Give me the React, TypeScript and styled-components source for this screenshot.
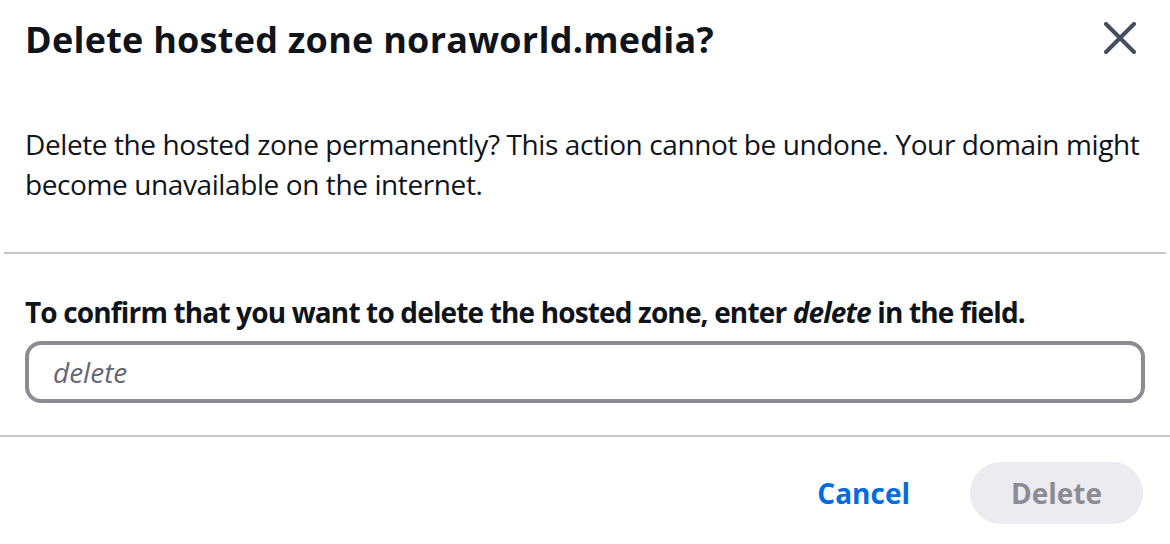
import React from "react";
import styled, { createGlobalStyle } from "styled-components";

const Global = createGlobalStyle`
  html, body { margin: 0; padding: 0; background: #ffffff; }
  body { font-family: "Open Sans", "Noto Sans", sans-serif; color: #0f141a; }
  * { box-sizing: border-box; }
`;

const Modal = styled.div`
  width: 1170px;
  height: 544px;
  background: #ffffff;
  display: flex;
  flex-direction: column;
`;

const Header = styled.div`
  display: flex;
  align-items: center;
  justify-content: space-between;
  padding: 7px 30px 0 25px;
  height: 73px;
`;

const Title = styled.h2`
  margin: 0;
  font-size: 36px;
  line-height: 44px;
  font-weight: 700;
  letter-spacing: 0.25px;
`;

const CloseButton = styled.button`
  border: none;
  background: none;
  padding: 0;
  width: 40px;
  height: 40px;
  margin-top: -5px;
  display: flex;
  align-items: center;
  justify-content: center;
  color: #414d5c;
  cursor: pointer;
`;

const Section = styled.div<{ $pt: number; $pb: number }>`
  padding: ${(p) => p.$pt}px 25px ${(p) => p.$pb}px 25px;
`;

const Body = styled.p`
  margin: 0;
  font-size: 28px;
  line-height: 40px;
  letter-spacing: -0.4px;
`;

const Divider = styled.hr<{ $inset: number }>`
  margin: 0 ${(p) => p.$inset}px;
  border: none;
  border-top: 2px solid #c6c6cd;
`;

const Label = styled.label`
  display: block;
  font-size: 28px;
  line-height: 40px;
  font-weight: 700;
  letter-spacing: -0.85px;
  margin-bottom: 9px;
`;

const Input = styled.input`
  display: block;
  width: 100%;
  height: 62px;
  border: 4px solid #8c8c94;
  border-radius: 16px;
  padding: 0 24px;
  font-family: inherit;
  font-size: 28px;
  color: #0f141a;
  outline: none;
  &::placeholder {
    color: #656871;
    font-style: italic;
  }
`;

const Footer = styled.div`
  display: flex;
  justify-content: flex-end;
  align-items: center;
  gap: 60px;
  padding: 25px 27px 0 25px;
`;

const LinkButton = styled.button`
  border: none;
  background: none;
  padding: 0;
  font-family: inherit;
  font-size: 28px;
  font-weight: 700;
  color: #006ce0;
  cursor: pointer;
`;

const PrimaryButton = styled.button`
  border: none;
  background: #ebebf0;
  color: #8c8c94;
  border-radius: 32px;
  height: 62px;
  width: 173px;
  font-family: inherit;
  font-size: 28px;
  font-weight: 700;
`;

export default function App() {
  return (
    <>
      <Global />
      <Modal>
        <Header>
          <Title>Delete hosted zone noraworld.media?</Title>
          <CloseButton aria-label="Close">
            <svg width="32" height="32" viewBox="0 0 32 32" fill="none">
              <path d="M2 2 L30 30 M30 2 L2 30" stroke="currentColor" strokeWidth="4" strokeLinecap="round" />
            </svg>
          </CloseButton>
        </Header>
        <Section $pt={51} $pb={48}>
          <Body>
            Delete the hosted zone permanently? This action cannot be undone. Your domain might become
            unavailable on the internet.
          </Body>
        </Section>
        <Divider $inset={4} />
        <Section $pt={38} $pb={32}>
          <Label>
            To confirm that you want to delete the hosted zone, enter <em>delete</em> in the field.
          </Label>
          <Input placeholder="delete" />
        </Section>
        <Divider $inset={0} />
        <Footer>
          <LinkButton>Cancel</LinkButton>
          <PrimaryButton disabled>Delete</PrimaryButton>
        </Footer>
      </Modal>
    </>
  );
}
